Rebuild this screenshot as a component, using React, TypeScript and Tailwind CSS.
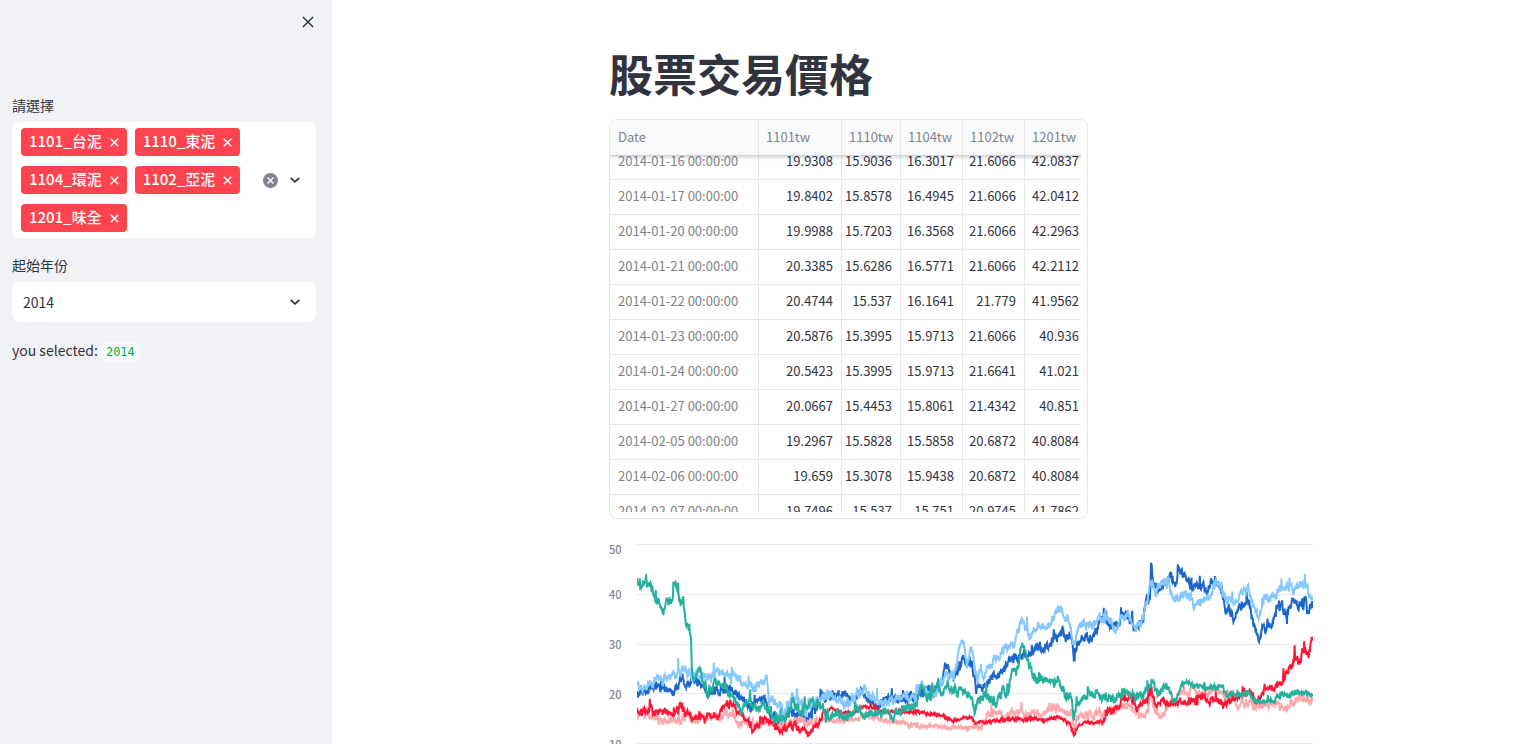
import { useState } from "react";

type Point = [number, number];

interface Series {
  name: string;
  color: string;
  seed: number;
  noise: number;
  points: Point[];
}

const PLOT_WIDTH = 676;

const SERIES: Series[] = [
  {
    name: "1101tw",
    color: "#1c66c7",
    seed: 11,
    noise: 5.4,
    points: [
      [0, 149], [6, 149], [13, 143], [20, 143], [26, 148], [38, 146], [46, 134], [50, 139], [63, 139], [71, 149],
      [83, 148], [95, 144], [106, 156], [116, 163], [126, 153], [136, 173], [143, 182], [153, 169], [165, 168],
      [168, 178], [175, 166], [183, 156], [196, 151], [206, 151], [215, 156], [223, 148], [233, 156], [240, 159],
      [251, 153], [266, 156], [280, 153], [285, 143], [293, 149], [301, 143], [305, 140], [308, 123], [318, 134],
      [326, 114], [331, 126], [335, 121], [339, 143], [350, 139], [360, 131], [366, 129], [370, 118], [383, 111],
      [395, 109], [405, 103], [416, 96], [426, 86], [429, 96], [435, 93], [437, 123], [439, 106], [445, 94],
      [456, 93], [461, 81], [467, 71], [475, 83], [480, 84], [486, 71], [498, 84], [506, 74], [509, 59], [513, 57],
      [514, 22], [516, 36], [520, 46], [533, 33], [538, 44], [542, 26], [548, 33], [556, 44], [563, 41], [570, 44],
      [579, 33], [585, 46], [589, 68], [592, 64], [596, 76], [603, 61], [611, 56], [616, 79], [621, 99], [625, 84],
      [633, 83], [638, 69], [644, 63], [650, 69], [656, 54], [660, 61], [668, 59], [672, 67], [676, 61],
    ],
  },
  {
    name: "1102tw",
    color: "#85c8ff",
    seed: 29,
    noise: 5.6,
    points: [
      [0, 142], [6, 143], [13, 139], [21, 134], [30, 136], [41, 129], [46, 124], [51, 131], [70, 132], [80, 129],
      [91, 129], [100, 133], [106, 139], [116, 143], [121, 138], [130, 139], [132, 153], [143, 163], [146, 168],
      [156, 153], [161, 154], [168, 168], [180, 156], [186, 151], [196, 154], [213, 159], [221, 148], [228, 144],
      [238, 156], [246, 159], [260, 154], [278, 156], [285, 141], [293, 151], [301, 144], [305, 138], [310, 131],
      [316, 133], [320, 116], [323, 103], [327, 92], [330, 119], [334, 103], [338, 124], [340, 131], [350, 128],
      [360, 116], [370, 103], [376, 101], [381, 86], [386, 76], [393, 93], [401, 81], [411, 84], [418, 69],
      [424, 63], [428, 74], [432, 73], [437, 106], [440, 88], [446, 79], [456, 83], [463, 74], [470, 76],
      [478, 84], [485, 69], [495, 74], [499, 86], [506, 73], [510, 58], [514, 39], [519, 49], [523, 39], [531, 36],
      [537, 59], [543, 48], [553, 54], [557, 64], [563, 56], [573, 53], [579, 38], [585, 44], [590, 56], [596, 58],
      [605, 53], [612, 43], [616, 59], [621, 73], [626, 54], [633, 56], [640, 46], [645, 41], [650, 46], [661, 41],
      [670, 39], [673, 54], [676, 48],
    ],
  },
  {
    name: "1110tw",
    color: "#ffa8ac",
    seed: 47,
    noise: 4.4,
    points: [
      [0, 171], [10, 169], [20, 172], [26, 178], [40, 178], [50, 173], [56, 179], [66, 174], [90, 171], [96, 168],
      [101, 179], [113, 181], [130, 178], [143, 182], [158, 178], [176, 178], [188, 176], [206, 177], [228, 173],
      [236, 173], [248, 177], [266, 178], [273, 182], [313, 183], [346, 183], [349, 181], [350, 169], [360, 170],
      [381, 170], [385, 168], [400, 169], [420, 165], [435, 168], [437, 186], [440, 171], [453, 171], [473, 169],
      [483, 163], [493, 161], [500, 168], [506, 171], [511, 169], [514, 143], [518, 171], [526, 174], [531, 163],
      [536, 161], [545, 146], [551, 151], [555, 139], [560, 151], [580, 146], [586, 153], [596, 151], [600, 161],
      [613, 158], [619, 163], [640, 159], [650, 162], [660, 156], [670, 154], [676, 153],
    ],
  },
  {
    name: "1104tw",
    color: "#ff1535",
    seed: 83,
    noise: 4.4,
    points: [
      [0, 169], [10, 166], [23, 168], [36, 170], [43, 163], [53, 173], [63, 171], [73, 173], [82, 171], [86, 163],
      [93, 159], [100, 166], [106, 173], [116, 187], [121, 184], [128, 176], [136, 179], [145, 186], [158, 181],
      [166, 187], [175, 184], [181, 181], [185, 169], [195, 165], [203, 169], [216, 169], [225, 163], [236, 163],
      [246, 168], [263, 167], [280, 168], [293, 170], [308, 173], [316, 178], [325, 173], [333, 173], [338, 178],
      [353, 178], [370, 175], [393, 175], [406, 176], [421, 173], [433, 179], [437, 193], [441, 181], [453, 179],
      [465, 177], [470, 166], [475, 168], [480, 164], [485, 153], [493, 154], [498, 163], [510, 156], [514, 143],
      [518, 159], [526, 154], [536, 156], [550, 158], [563, 154], [580, 156], [588, 159], [593, 153], [610, 148],
      [616, 154], [621, 156], [628, 146], [638, 143], [646, 138], [649, 128], [655, 126], [658, 111], [661, 123],
      [665, 108], [671, 109], [676, 101],
    ],
  },
  {
    name: "1201tw",
    color: "#24b09b",
    seed: 101,
    noise: 5.6,
    points: [
      [0, 34], [5, 44], [9, 29], [10, 39], [15, 46], [19, 58], [22, 59], [26, 69], [30, 56], [35, 59], [37, 40],
      [41, 46], [44, 64], [46, 58], [49, 83], [54, 93], [55, 129], [57, 142], [62, 124], [66, 139], [71, 144],
      [78, 139], [88, 141], [93, 146], [98, 156], [105, 166], [110, 158], [113, 151], [116, 166], [125, 161],
      [130, 166], [137, 175], [150, 173], [156, 156], [160, 168], [166, 169], [174, 156], [181, 161], [188, 169],
      [200, 171], [211, 173], [219, 163], [225, 169], [231, 173], [240, 166], [255, 171], [268, 163], [278, 164],
      [286, 143], [290, 153], [300, 144], [306, 149], [313, 144], [323, 148], [333, 153], [338, 168], [346, 149],
      [353, 154], [360, 156], [366, 148], [372, 146], [374, 131], [381, 124], [386, 98], [390, 114], [396, 129],
      [406, 138], [423, 139], [429, 151], [435, 153], [437, 176], [440, 159], [450, 149], [460, 148], [463, 156],
      [473, 155], [483, 151], [491, 146], [498, 154], [510, 149], [515, 134], [519, 149], [530, 146], [538, 154],
      [549, 136], [555, 143], [573, 144], [586, 141], [590, 151], [603, 151], [613, 149], [620, 159], [626, 156],
      [638, 156], [645, 148], [650, 151], [661, 148], [676, 151],
    ],
  },
];

// Volatility relative to the series' own level: some stretches trade in a narrower band.
function volatility(name: string, x: number): number {
  if (name === "1104tw" && x > 185 && x < 465) return 0.4;
  if (name === "1104tw" && x > 655) return 1.8;
  if (name === "1110tw" && x > 180 && x < 345) return 0.45;
  if (name === "1201tw" && x > 540) return 0.55;
  return 1;
}

// Daily closes: a seeded random walk around the trend line of each series.
function buildPath(series: Series): string {
  let state = series.seed * 7919;
  const random = () => {
    state = (state * 1103515245 + 12345) % 2147483648;
    return state / 2147483648;
  };
  const { points } = series;
  let path = "";
  let segment = 0;
  let drift = 0;
  for (let x = 0; x <= PLOT_WIDTH; x += 0.4) {
    while (segment < points.length - 2 && points[segment + 1][0] < x) segment++;
    const [x0, y0] = points[segment];
    const [x1, y1] = points[segment + 1];
    const trend = y0 + ((y1 - y0) * Math.min(1, Math.max(0, x - x0) / (x1 - x0)));
    const scale = series.noise * volatility(series.name, x);
    drift = drift * 0.68 + (random() - 0.5) * scale * 1.3;
    const spike = random() > 0.94 ? (random() - 0.6) * scale * 3.4 : 0;
    path += `${path ? "L" : "M"}${x.toFixed(1)} ${(trend + drift + spike).toFixed(1)}`;
  }
  return path;
}

const CHART_LINES = SERIES.map((s) => ({ name: s.name, color: s.color, d: buildPath(s) }));

const COLUMNS = ["Date", "1101tw", "1110tw", "1104tw", "1102tw", "1201tw"];

const ROWS = [
  ["2014-01-16 00:00:00", "19.9308", "15.9036", "16.3017", "21.6066", "42.0837"],
  ["2014-01-17 00:00:00", "19.8402", "15.8578", "16.4945", "21.6066", "42.0412"],
  ["2014-01-20 00:00:00", "19.9988", "15.7203", "16.3568", "21.6066", "42.2963"],
  ["2014-01-21 00:00:00", "20.3385", "15.6286", "16.5771", "21.6066", "42.2112"],
  ["2014-01-22 00:00:00", "20.4744", "15.537", "16.1641", "21.779", "41.9562"],
  ["2014-01-23 00:00:00", "20.5876", "15.3995", "15.9713", "21.6066", "40.936"],
  ["2014-01-24 00:00:00", "20.5423", "15.3995", "15.9713", "21.6641", "41.021"],
  ["2014-01-27 00:00:00", "20.0667", "15.4453", "15.8061", "21.4342", "40.851"],
  ["2014-02-05 00:00:00", "19.2967", "15.5828", "15.5858", "20.6872", "40.8084"],
  ["2014-02-06 00:00:00", "19.659", "15.3078", "15.9438", "20.6872", "40.8084"],
  ["2014-02-07 00:00:00", "19.7496", "15.537", "15.751", "20.9745", "41.7862"],
];

function Cross({ className }: { className: string }) {
  return (
    <svg viewBox="0 0 10 10" fill="none" stroke="currentColor" className={className} aria-hidden="true">
      <path d="M0.8 0.8L9.2 9.2M9.2 0.8L0.8 9.2" />
    </svg>
  );
}

function Chevron() {
  return (
    <svg viewBox="0 0 10 6" fill="none" stroke="currentColor" className="h-[6px] w-[10px]" aria-hidden="true">
      <path d="M0.7 0.8L5 4.8L9.3 0.8" strokeWidth="1.8" />
    </svg>
  );
}

function Sidebar() {
  const [stocks, setStocks] = useState(["1101_台泥", "1110_東泥", "1104_環泥", "1102_亞泥", "1201_味全"]);
  const [year, setYear] = useState("2014");

  return (
    <aside className="w-[332px] shrink-0 bg-[#f0f2f6] pl-3 pr-4">
      <div className="flex h-[95px] justify-end pt-3">
        <button type="button" aria-label="Close" className="flex h-5 w-4 items-center justify-center">
          <Cross className="size-[12px] stroke-[1.2]" />
        </button>
      </div>

      <label htmlFor="stocks" className="block text-[14px] leading-5">
        請選擇
      </label>
      <div className="mt-[7px] flex items-center rounded-lg bg-white py-[6px] pl-[9px] pr-4">
        <div className="flex min-w-0 flex-1 flex-wrap gap-x-2 gap-y-[10px]">
          {stocks.map((stock) => (
            <span
              key={stock}
              className="flex h-7 items-center gap-2 rounded bg-[#ff4450] px-2 text-[15px] font-medium text-white"
            >
              <span className="pb-[2px] leading-5">{stock}</span>
              <button
                type="button"
                aria-label={`Remove ${stock}`}
                onClick={() => setStocks(stocks.filter((s) => s !== stock))}
              >
                <Cross className="size-[9px] stroke-[1.6]" />
              </button>
            </span>
          ))}
          <input id="stocks" type="text" className="w-4 min-w-0 bg-transparent outline-none" />
        </div>
        <button
          type="button"
          aria-label="Clear all"
          onClick={() => setStocks([])}
          className="mr-3 flex size-[15px] items-center justify-center rounded-full bg-[#808495] text-white"
        >
          <Cross className="size-[7px] stroke-[1.9]" />
        </button>
        <Chevron />
      </div>

      <label htmlFor="year" className="mt-[17px] block text-[14px] leading-5">
        起始年份
      </label>
      <div className="relative mt-[7px]">
        <select
          id="year"
          value={year}
          onChange={(e) => setYear(e.target.value)}
          className="h-10 w-full appearance-none rounded-lg bg-white px-[11px] text-[14px] outline-none"
        >
          <option value="2014">2014</option>
          <option value="2015">2015</option>
        </select>
        <span className="pointer-events-none absolute inset-y-0 right-4 flex items-center">
          <Chevron />
        </span>
      </div>

      <p className="mt-4 text-[14px] leading-6">
        you selected:{" "}
        <code className="rounded bg-[#f8f9fb] px-[5px] py-[3px] font-['DejaVu_Sans_Mono',monospace] text-[12px] text-[#09ab3b]">
          {year}
        </code>
      </p>
    </aside>
  );
}

function PriceTable() {
  return (
    <div className="h-[400px] w-[479px] rounded-lg border border-[#e6e8eb] pb-[6px] pr-[6px]">
      <div className="h-full overflow-hidden rounded-tl-lg">
        <table className="mt-[-11px] w-[477px] table-fixed border-separate border-spacing-0 whitespace-nowrap text-[13px] leading-5">
          <colgroup>
            <col className="w-[149px]" />
            <col className="w-[83px]" />
            <col className="w-[59px]" />
            <col className="w-[62px]" />
            <col className="w-[62px]" />
            <col className="w-[62px]" />
          </colgroup>
          <thead className="sticky top-0 z-10 shadow-[0_1px_4px_rgba(49,51,63,0.25)]">
            <tr>
              {COLUMNS.map((column) => (
                <th
                  key={column}
                  className="h-9 border-b border-r border-b-[#d0d2d6] border-r-[#e6e7ea] bg-[#f8f9fb] pb-[2px] pl-[7px] pr-0 pt-0 text-left font-normal text-[#808289] first:pl-2 last:border-r-0"
                >
                  {column}
                </th>
              ))}
            </tr>
          </thead>
          <tbody>
            {ROWS.map((row) => (
              <tr key={row[0]}>
                {row.map((value, i) => (
                  <td
                    key={COLUMNS[i]}
                    className="h-[35px] border-b border-r border-[#e6e7ea] pb-[2px] pl-0 pr-2 pt-0 text-right first:pl-2 first:pr-0 first:text-left first:text-[#808289] last:border-r-0"
                  >
                    {value}
                  </td>
                ))}
              </tr>
            ))}
          </tbody>
        </table>
      </div>
    </div>
  );
}

function PriceChart() {
  return (
    <div className="mt-[25px] flex gap-4">
      <div className="flex w-3 shrink-0 flex-col text-[11px] font-medium text-[#808495]">
        {["50", "40", "30", "20", "10"].map((tick) => (
          <span key={tick} className="h-[50px] leading-[10px] first:h-[45px]">
            {tick}
          </span>
        ))}
      </div>
      <svg
        viewBox="0 0 676 250"
        preserveAspectRatio="none"
        className="h-[250px] min-w-0 flex-1"
        role="img"
        aria-label="股票交易價格"
      >
        <g stroke="#e6eaf1" strokeWidth="1">
          {[0.5, 50.5, 100.5, 149.5, 199.5].map((y) => (
            <path key={y} d={`M0 ${y}H676`} />
          ))}
        </g>
        <g fill="none" strokeWidth="2" strokeLinejoin="miter">
          {CHART_LINES.map((line) => (
            <path key={line.name} d={line.d} stroke={line.color} />
          ))}
        </g>
      </svg>
    </div>
  );
}

export default function App() {
  return (
    <div
      lang="zh-Hant"
      className="flex h-screen overflow-hidden bg-white font-['Noto_Sans_CJK_TC',sans-serif] text-[#31333f]"
    >
      <Sidebar />
      <main className="flex min-w-0 flex-1 justify-center overflow-hidden pl-[59px]">
        <div className="w-full max-w-[704px]">
          <h1 className="pb-[19px] pt-[47px] text-[44px] font-bold leading-[53px]">股票交易價格</h1>
          <PriceTable />
          <PriceChart />
        </div>
      </main>
    </div>
  );
}
